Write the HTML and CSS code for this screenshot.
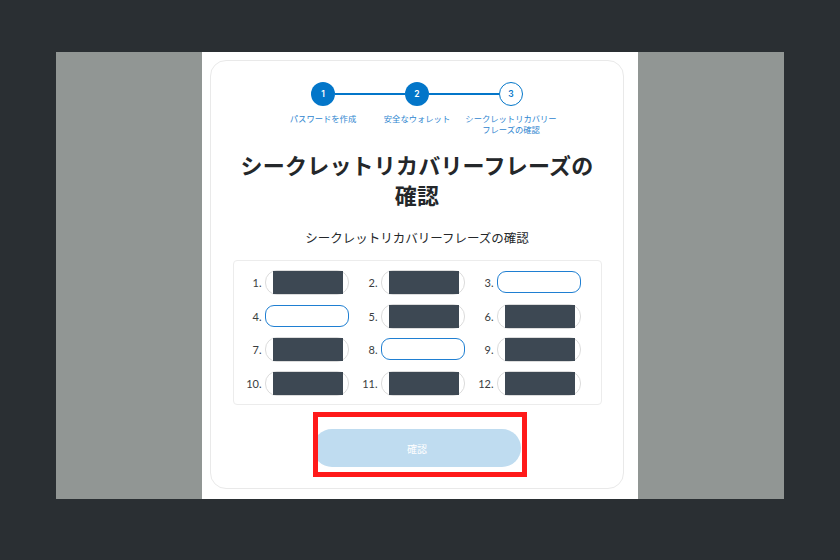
FILE: index.html
```html
<!DOCTYPE html>
<html lang="ja">
<head>
<meta charset="utf-8">
<title>シークレットリカバリーフレーズの確認</title>
<link rel="stylesheet" href="styles.css">
</head>
<body>
<div class="stage">
  <div class="panel">
    <div class="column">
      <div class="card">
        <div class="stepper">
          <div class="dots">
            <span class="dot done">1</span>
            <span class="bar"></span>
            <span class="dot done">2</span>
            <span class="bar"></span>
            <span class="dot current">3</span>
          </div>
          <div class="labels">
            <span class="label">パスワードを作成</span>
            <span class="label">安全なウォレット</span>
            <span class="label">シークレットリカバリー<br>フレーズの確認</span>
          </div>
        </div>
        <h1 class="title">シークレットリカバリーフレーズの<br>確認</h1>
        <p class="subtitle">シークレットリカバリーフレーズの確認</p>
        <div class="words">
          <div class="cell"><span class="num">1.</span><span class="word filled"><span class="mask"></span></span></div>
          <div class="cell"><span class="num">2.</span><span class="word filled"><span class="mask"></span></span></div>
          <div class="cell"><span class="num">3.</span><span class="word empty"></span></div>
          <div class="cell"><span class="num">4.</span><span class="word empty"></span></div>
          <div class="cell"><span class="num">5.</span><span class="word filled"><span class="mask"></span></span></div>
          <div class="cell"><span class="num">6.</span><span class="word filled"><span class="mask"></span></span></div>
          <div class="cell"><span class="num">7.</span><span class="word filled"><span class="mask"></span></span></div>
          <div class="cell"><span class="num">8.</span><span class="word empty"></span></div>
          <div class="cell"><span class="num">9.</span><span class="word filled"><span class="mask"></span></span></div>
          <div class="cell"><span class="num">10.</span><span class="word filled"><span class="mask"></span></span></div>
          <div class="cell"><span class="num">11.</span><span class="word filled"><span class="mask"></span></span></div>
          <div class="cell"><span class="num">12.</span><span class="word filled"><span class="mask"></span></span></div>
        </div>
        <div class="actions">
          <button class="confirm" type="button">確認</button>
        </div>
        <div class="highlight"></div>
      </div>
    </div>
  </div>
</div>
</body>
</html>
```

FILE: styles.css
```css
* { box-sizing: border-box; }
html, body { margin: 0; padding: 0; }
body {
  background: #2a2f33;
  width: 840px;
  height: 560px;
  overflow: hidden;
  font-family: "Noto Sans CJK JP", "Noto Sans", sans-serif;
}
.stage {
  padding: 52px 0 0 56px;
}
.panel {
  width: 728px;
  height: 447px;
  background: #919694;
  padding-left: 146px;
}
.column {
  width: 436px;
  height: 447px;
  background: #ffffff;
  padding: 8px 0 0 8px;
}
.card {
  position: relative;
  width: 414px;
  height: 429px;
  border: 1px solid #e9e9e9;
  border-radius: 16px;
  display: flex;
  flex-direction: column;
  align-items: center;
  padding-top: 21px;
}
.stepper {
  display: flex;
  flex-direction: column;
  align-items: center;
}
.dots {
  display: flex;
  align-items: center;
}
.dot {
  width: 24px;
  height: 24px;
  border-radius: 50%;
  display: flex;
  align-items: center;
  justify-content: center;
  font-family: "Inter", "Liberation Sans", sans-serif;
  font-size: 8.5px;
  font-weight: 600;
}
.dot.done {
  background: #0376c9;
  color: #ffffff;
}
.dot.current {
  background: #ffffff;
  color: #0376c9;
  border: 1.5px solid #0376c9;
}
.bar {
  width: 70px;
  height: 2px;
  background: #0376c9;
}
.labels {
  display: grid;
  grid-template-columns: 94px 94px 94px;
  margin-top: 7px;
}
.label {
  font-size: 8.3px;
  line-height: 11px;
  color: #2f86d0;
  text-align: center;
  white-space: nowrap;
  justify-self: center;
}
.title {
  margin: 14px 0 0;
  font-size: 22px;
  line-height: 30px;
  font-weight: 700;
  color: #24272a;
  text-align: center;
  letter-spacing: 0.2px;
}
.subtitle {
  margin: 20px 0 0;
  font-size: 12.5px;
  line-height: 18px;
  color: #24272a;
  text-align: center;
}
.words {
  margin-top: 13px;
  width: 369px;
  height: 145px;
  border: 1px solid #ececec;
  border-radius: 4px;
  padding: 9px 0 0 0;
  display: grid;
  grid-template-columns: 116px 116px 116px;
  grid-auto-rows: 25px;
  row-gap: 8.5px;
}
.cell {
  display: flex;
  align-items: flex-start;
}
.num {
  width: 29px;
  height: 25px;
  line-height: 26px;
  padding-right: 1px;
  text-align: right;
  font-family: "Lato", "Liberation Sans", sans-serif;
  font-size: 11px;
  color: #3a3d40;
}
.word {
  position: relative;
  margin-left: 2px;
  width: 84px;
  border-radius: 12px;
}
.word.filled {
  height: 25px;
  border: 1px solid #dcdcdc;
}
.word.empty {
  margin-top: 1px;
  height: 22px;
  border: 1.5px solid #1f7fd2;
  border-radius: 9px;
  background: #ffffff;
}
.mask {
  position: absolute;
  left: 7px;
  top: 0px;
  width: 70px;
  height: 23px;
  background: #3d4853;
}
.actions {
  margin-top: 24px;
}
.confirm {
  width: 208px;
  height: 38px;
  border: none;
  border-radius: 19px;
  background: #bfdcf0;
  color: #ffffff;
  font-family: "Noto Sans CJK JP", sans-serif;
  font-size: 10px;
  padding: 0;
}
.highlight {
  position: absolute;
  left: 102px;
  top: 351px;
  width: 214px;
  height: 65px;
  border: 5px solid #ff1a1a;
}
```
